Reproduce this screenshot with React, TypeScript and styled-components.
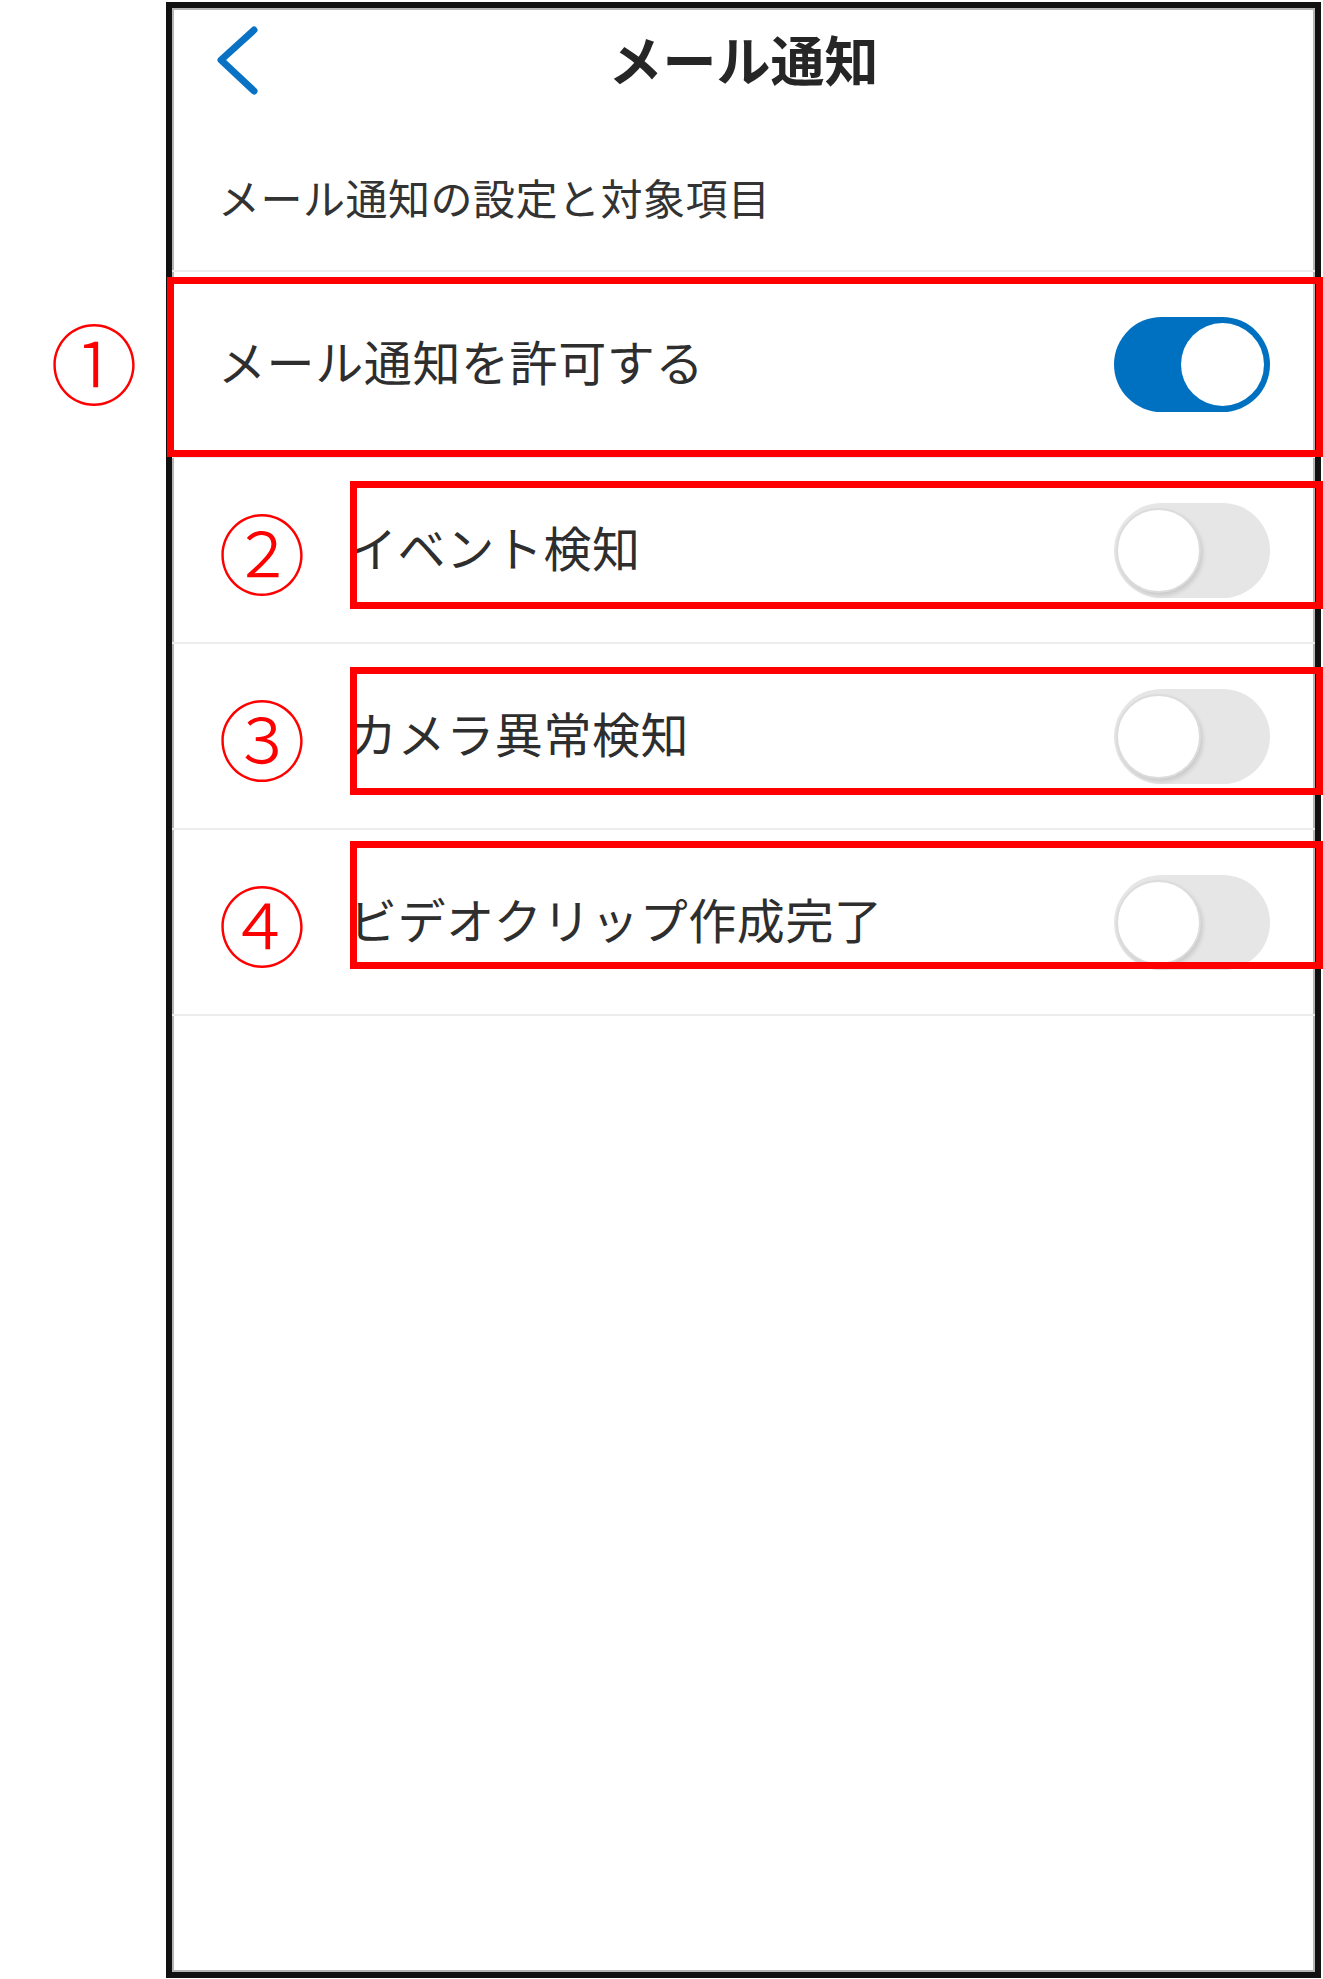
import React from 'react';
import styled, { createGlobalStyle } from 'styled-components';

const GlobalStyle = createGlobalStyle`
  html, body {
    margin: 0;
    padding: 0;
    background: #ffffff;
  }
  body {
    font-family: "Noto Sans CJK JP", "Noto Sans", sans-serif;
  }
`;

const Page = styled.div`
  width: 1323px;
  height: 1979px;
  padding-top: 2px;
  box-sizing: border-box;
  overflow: hidden;
`;

const Phone = styled.div`
  position: relative;
  margin-left: 166px;
  width: 1155px;
  height: 1976px;
  box-sizing: border-box;
  border: 6px solid #111;
  box-shadow: inset 0 0 0 2px #b5b5b5;
  background: #fff;
`;

const NavBar = styled.div`
  height: 106px;
  display: grid;
  grid-template-columns: 1fr auto 1fr;
  align-items: center;
`;

const BackButton = styled.div`
  display: flex;
  align-items: center;
  padding-left: 44px;
`;

const Title = styled.div`
  font-size: 54px;
  font-weight: 700;
  color: #262626;
  line-height: 1;
  margin-top: -4px;
`;

const Subtitle = styled.div`
  height: 158px;
  box-sizing: border-box;
  padding: 62px 0 0 46px;
  font-size: 42px;
  line-height: 1;
  letter-spacing: 0.5px;
  color: #333;
  border-bottom: 2px solid #ececec;
`;

const Row = styled.div`
  position: relative;
  height: 186px;
  box-sizing: border-box;
  display: flex;
  align-items: center;
  padding: 0 45px 0 46px;
  border-bottom: 2px solid #ececec;
`;

const Label = styled.div`
  flex: 1;
  font-size: 48px;
  line-height: 1;
  color: #2e2e2e;
  letter-spacing: 0.6px;
  margin-top: -8px;
`;

const Marker = styled.div<{ $outside?: boolean }>`
  width: ${p => (p.$outside ? '80px' : '131px')};
  flex-shrink: 0;
  color: #ff0000;
  font-size: 88px;
  line-height: 1;
  font-weight: 300;
  ${p =>
    p.$outside &&
    `
    position: absolute;
    left: -122px;
    top: 50%;
    transform: translateY(-54%);
  `}
`;

const Highlight = styled.div<{ $left: number; $top: number; $height: number }>`
  position: absolute;
  left: ${p => p.$left}px;
  right: -8px;
  top: ${p => p.$top}px;
  height: ${p => p.$height}px;
  box-sizing: border-box;
  border: 7px solid #ff0000;
  pointer-events: none;
`;

const Track = styled.div<{ $on: boolean }>`
  position: relative;
  width: 156px;
  height: 95px;
  flex-shrink: 0;
  border-radius: 48px;
  background: ${p => (p.$on ? '#0070c0' : '#e6e6e6')};
`;

const Knob = styled.div<{ $on: boolean }>`
  position: absolute;
  top: ${p => (p.$on ? '6px' : '5px')};
  left: ${p => (p.$on ? '67px' : '2px')};
  width: ${p => (p.$on ? '83px' : '85px')};
  height: ${p => (p.$on ? '83px' : '85px')};
  box-sizing: border-box;
  border-radius: 50%;
  background: #fff;
  border: ${p => (p.$on ? 'none' : '2px solid #dcdcdc')};
  box-shadow: ${p => (p.$on ? 'none' : '2px 3px 4px rgba(0,0,0,0.12)')};
`;

const Toggle = ({ on }: { on: boolean }) => (
  <Track $on={on}>
    <Knob $on={on} />
  </Track>
);

const items = [
  { mark: '②', label: 'イベント検知', top: 23 },
  { mark: '③', label: 'カメラ異常検知', top: 23 },
  { mark: '④', label: 'ビデオクリップ作成完了', top: 11 },
];

export default function App() {
  return (
    <>
      <GlobalStyle />
      <Page>
        <Phone>
          <NavBar>
            <BackButton>
              <svg width="44" height="72" viewBox="0 0 44 72">
                <polyline
                  points="38,5 5,35 38,66"
                  fill="none"
                  stroke="#0a72c4"
                  strokeWidth="7"
                  strokeLinecap="round"
                  strokeLinejoin="round"
                />
              </svg>
            </BackButton>
            <Title>メール通知</Title>
            <div />
          </NavBar>
          <Subtitle>メール通知の設定と対象項目</Subtitle>

          <Row>
            <Marker $outside>①</Marker>
            <Label>メール通知を許可する</Label>
            <Toggle on />
            <Highlight $left={-5} $top={5} $height={180} />
          </Row>

          {items.map(item => (
            <Row key={item.label}>
              <Marker>{item.mark}</Marker>
              <Label>{item.label}</Label>
              <Toggle on={false} />
              <Highlight $left={178} $top={item.top} $height={128} />
            </Row>
          ))}
        </Phone>
      </Page>
    </>
  );
}
